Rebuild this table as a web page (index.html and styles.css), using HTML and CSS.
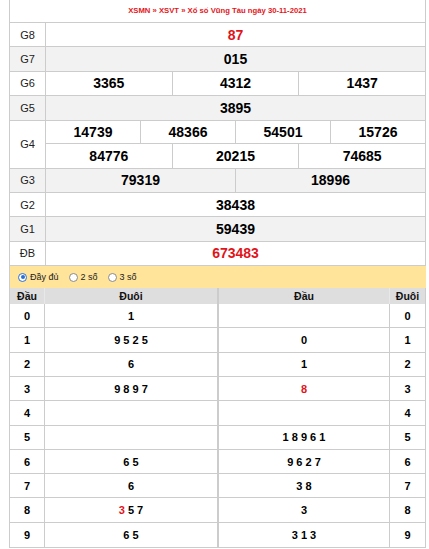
FILE: index.html
```html
<!DOCTYPE html>
<html lang="vi">
<head>
<meta charset="utf-8">
<title>XSVT</title>
<link rel="stylesheet" href="styles.css">
</head>
<body>
<div class="wrap">
  <div class="kq">
    <div class="title">XSMN » XSVT » Xổ số Vũng Tàu ngày 30-11-2021</div>
    <div class="row"><div class="lbl">G8</div><div class="vals"><div class="v red">87</div></div></div>
    <div class="row alt"><div class="lbl">G7</div><div class="vals"><div class="v">015</div></div></div>
    <div class="row"><div class="lbl">G6</div><div class="vals"><div class="v">3365</div><div class="v">4312</div><div class="v">1437</div></div></div>
    <div class="row alt"><div class="lbl">G5</div><div class="vals"><div class="v">3895</div></div></div>
    <div class="row"><div class="lbl">G4</div>
      <div class="multi">
        <div class="vals sub"><div class="v">14739</div><div class="v">48366</div><div class="v">54501</div><div class="v">15726</div></div>
        <div class="vals"><div class="v">84776</div><div class="v">20215</div><div class="v">74685</div></div>
      </div>
    </div>
    <div class="row alt"><div class="lbl">G3</div><div class="vals"><div class="v">79319</div><div class="v">18996</div></div></div>
    <div class="row"><div class="lbl">G2</div><div class="vals"><div class="v">38438</div></div></div>
    <div class="row alt"><div class="lbl">G1</div><div class="vals"><div class="v">59439</div></div></div>
    <div class="row"><div class="lbl">ĐB</div><div class="vals"><div class="v red">673483</div></div></div>
  </div>
  <div class="opts">
    <span class="opt"><span class="radio on"></span>Đầy đủ</span>
    <span class="opt"><span class="radio"></span>2 số</span>
    <span class="opt"><span class="radio"></span>3 số</span>
  </div>
  <div class="loto">
    <div class="lt left">
      <div class="lr head"><div class="c n">Đầu</div><div class="c w">Đuôi</div></div>
      <div class="lr"><div class="c n">0</div><div class="c w">1</div></div>
      <div class="lr"><div class="c n">1</div><div class="c w">9 5 2 5</div></div>
      <div class="lr"><div class="c n">2</div><div class="c w">6</div></div>
      <div class="lr"><div class="c n">3</div><div class="c w">9 8 9 7</div></div>
      <div class="lr"><div class="c n">4</div><div class="c w"></div></div>
      <div class="lr"><div class="c n">5</div><div class="c w"></div></div>
      <div class="lr"><div class="c n">6</div><div class="c w">6 5</div></div>
      <div class="lr"><div class="c n">7</div><div class="c w">6</div></div>
      <div class="lr"><div class="c n">8</div><div class="c w"><span><span class="red">3</span> 5 7</span></div></div>
      <div class="lr"><div class="c n">9</div><div class="c w">6 5</div></div>
    </div>
    <div class="lt right">
      <div class="lr head"><div class="c w">Đầu</div><div class="c n">Đuôi</div></div>
      <div class="lr"><div class="c w"></div><div class="c n">0</div></div>
      <div class="lr"><div class="c w">0</div><div class="c n">1</div></div>
      <div class="lr"><div class="c w">1</div><div class="c n">2</div></div>
      <div class="lr"><div class="c w"><span class="red">8</span></div><div class="c n">3</div></div>
      <div class="lr"><div class="c w"></div><div class="c n">4</div></div>
      <div class="lr"><div class="c w">1 8 9 6 1</div><div class="c n">5</div></div>
      <div class="lr"><div class="c w">9 6 2 7</div><div class="c n">6</div></div>
      <div class="lr"><div class="c w">3 8</div><div class="c n">7</div></div>
      <div class="lr"><div class="c w">3</div><div class="c n">8</div></div>
      <div class="lr"><div class="c w">3 1 3</div><div class="c n">9</div></div>
    </div>
  </div>
</div>
</body>
</html>
```

FILE: styles.css
```css
* { box-sizing: border-box; }
html, body { margin: 0; padding: 0; background: #fff; }
body { font-family: "Liberation Sans", Arial, sans-serif; color: #000; }
.wrap { margin-left: 9px; width: 417px; }
.kq { border-left: 1px solid #ccc; border-right: 1px solid #ccc; }
.title {
  height: 23px; border-bottom: 1px solid #ccc;
  display: flex; align-items: center; justify-content: center;
  color: #e3161a; font-size: 7.7px; font-weight: bold; padding-bottom: 1px;
}
.row { display: flex; border-bottom: 1px solid #ccc; background: #fff; }
.row.alt { background: #f2f2f2; }
.lbl {
  width: 36px; flex: none; border-right: 1px solid #ccc;
  display: flex; align-items: center; justify-content: center;
  font-size: 11px; color: #222;
}
.vals { flex: 1; display: flex; height: 23.4px; }
.multi { flex: 1; display: flex; flex-direction: column; }
.multi .vals { flex: none; }
.vals.sub { border-bottom: 1px solid #ccc; height: 23.6px; }
.v {
  flex: 1; display: flex; align-items: center; justify-content: center;
  font-size: 14px; font-weight: bold;
}
.v + .v { border-left: 1px solid #ccc; }
.red { color: #e0141b; }
.opts {
  height: 22px; background: #ffe49a; border-left: 1px solid #ccc;
  display: flex; align-items: center; padding-left: 8px; gap: 10px;
  font-size: 9px; color: #222;
}
.opt { display: flex; align-items: center; gap: 3px; }
.radio {
  width: 9px; height: 9px; border-radius: 50%; border: 1px solid #8a8a8a;
  background: #fff; display: inline-block; position: relative;
}
.radio.on { border-color: #2a6fd6; }
.radio.on::after {
  content: ""; position: absolute; left: 1.5px; top: 1.5px; width: 4px; height: 4px;
  border-radius: 50%; background: #2a6fd6;
}
.loto { display: flex; }
.lt { border: 1px solid #ccc; border-top: none; }
.lt.left { width: 209px; }
.lt.right { width: 208px; border-left: 1px solid #ccc; }
.lr { display: flex; border-bottom: 1px solid #ccc; height: 24.3px; }
.lr:last-child { border-bottom: none; }
.lr.head { height: 16px; background: #dedede; border-bottom: none; }
.c {
  display: flex; align-items: center; justify-content: center;
  font-size: 11px; font-weight: bold;
}
.left .c.n { width: 35px; border-right: 1px solid #ccc; }
.left .c.w { flex: 1; }
.right .c.w { flex: 1; border-right: 1px solid #ccc; }
.right .c.n { width: 35px; }
.head .c { font-size: 10.5px; color: #111; border-color: #e8e8e8 !important; }
```
